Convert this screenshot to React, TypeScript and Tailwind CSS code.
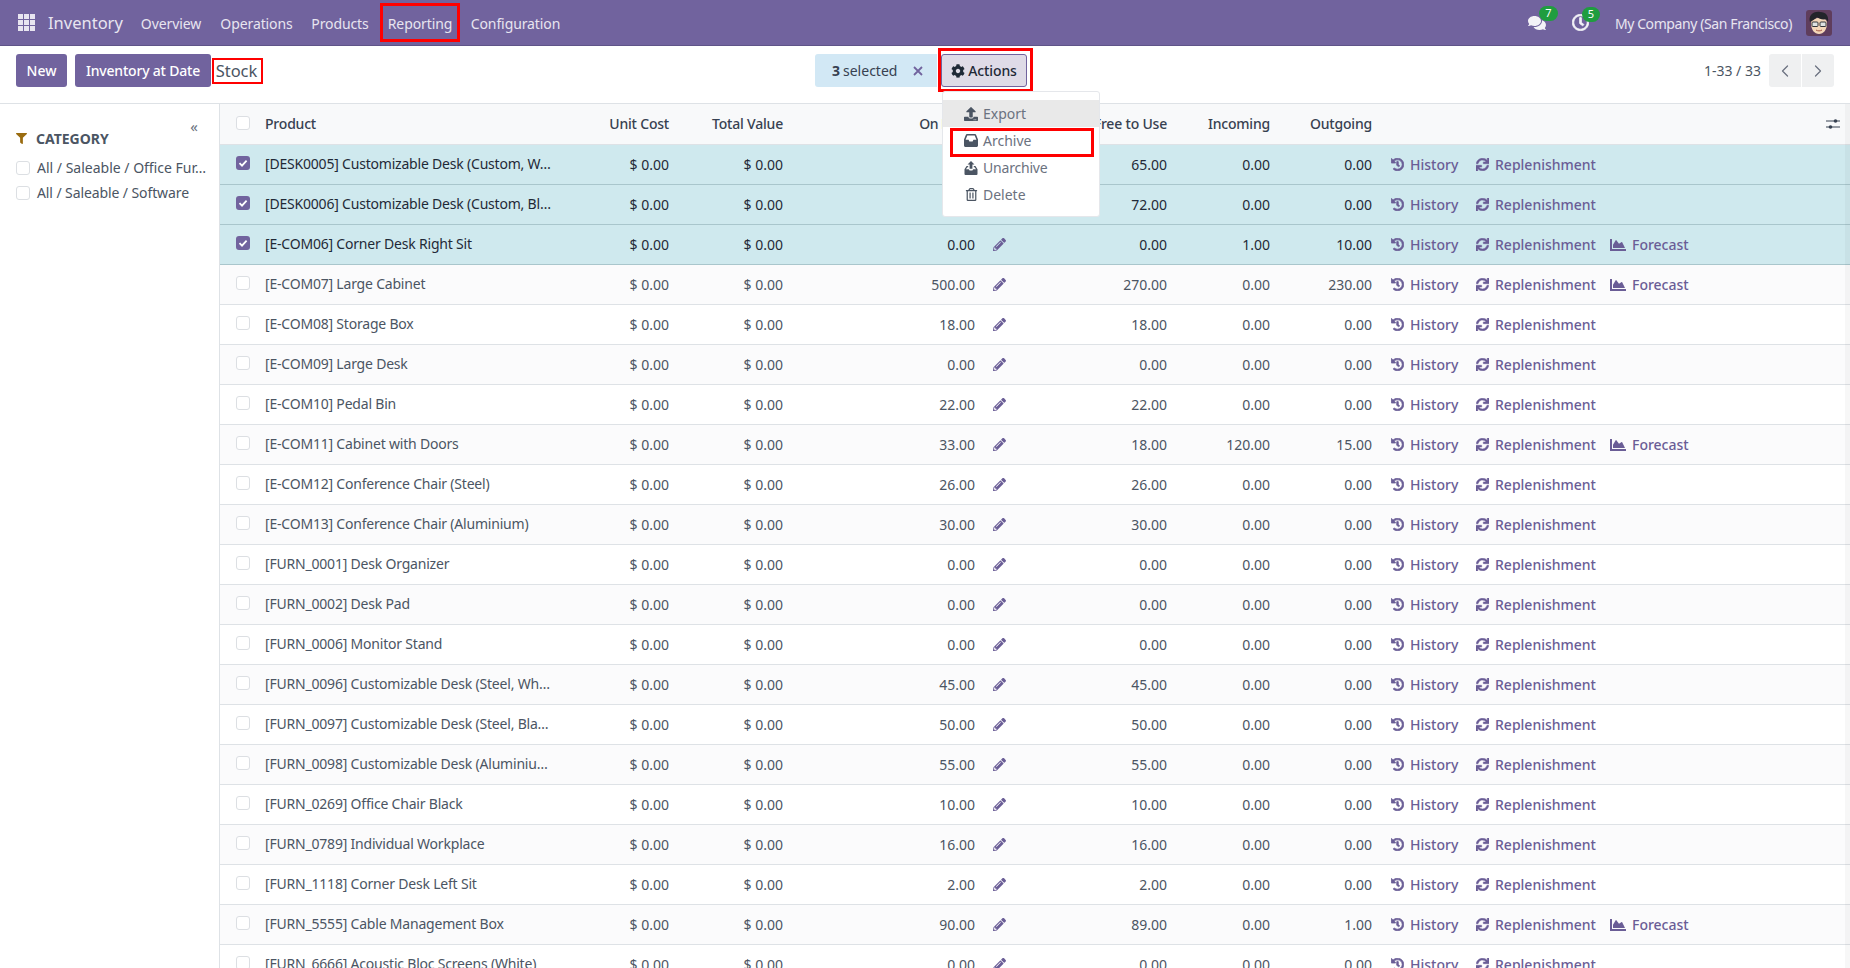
import { FaChartArea, FaCog, FaComments, FaFilter, FaHistory, FaPencilAlt, FaRegClock, FaRegTrashAlt, FaSync, FaUpload } from "react-icons/fa";
import { ChevronLeft, ChevronRight } from "lucide-react";

interface ProductRow {
  name: string;
  onHand: string;
  free: string;
  incoming: string;
  outgoing: string;
  forecast?: boolean;
  selected?: boolean;
}

const rows: ProductRow[] = [
  { name: "[DESK0005] Customizable Desk (Custom, W…", onHand: "65.00", free: "65.00", incoming: "0.00", outgoing: "0.00", selected: true },
  { name: "[DESK0006] Customizable Desk (Custom, Bl…", onHand: "72.00", free: "72.00", incoming: "0.00", outgoing: "0.00", selected: true },
  { name: "[E-COM06] Corner Desk Right Sit", onHand: "0.00", free: "0.00", incoming: "1.00", outgoing: "10.00", forecast: true, selected: true },
  { name: "[E-COM07] Large Cabinet", onHand: "500.00", free: "270.00", incoming: "0.00", outgoing: "230.00", forecast: true },
  { name: "[E-COM08] Storage Box", onHand: "18.00", free: "18.00", incoming: "0.00", outgoing: "0.00" },
  { name: "[E-COM09] Large Desk", onHand: "0.00", free: "0.00", incoming: "0.00", outgoing: "0.00" },
  { name: "[E-COM10] Pedal Bin", onHand: "22.00", free: "22.00", incoming: "0.00", outgoing: "0.00" },
  { name: "[E-COM11] Cabinet with Doors", onHand: "33.00", free: "18.00", incoming: "120.00", outgoing: "15.00", forecast: true },
  { name: "[E-COM12] Conference Chair (Steel)", onHand: "26.00", free: "26.00", incoming: "0.00", outgoing: "0.00" },
  { name: "[E-COM13] Conference Chair (Aluminium)", onHand: "30.00", free: "30.00", incoming: "0.00", outgoing: "0.00" },
  { name: "[FURN_0001] Desk Organizer", onHand: "0.00", free: "0.00", incoming: "0.00", outgoing: "0.00" },
  { name: "[FURN_0002] Desk Pad", onHand: "0.00", free: "0.00", incoming: "0.00", outgoing: "0.00" },
  { name: "[FURN_0006] Monitor Stand", onHand: "0.00", free: "0.00", incoming: "0.00", outgoing: "0.00" },
  { name: "[FURN_0096] Customizable Desk (Steel, Wh…", onHand: "45.00", free: "45.00", incoming: "0.00", outgoing: "0.00" },
  { name: "[FURN_0097] Customizable Desk (Steel, Bla…", onHand: "50.00", free: "50.00", incoming: "0.00", outgoing: "0.00" },
  { name: "[FURN_0098] Customizable Desk (Aluminiu…", onHand: "55.00", free: "55.00", incoming: "0.00", outgoing: "0.00" },
  { name: "[FURN_0269] Office Chair Black", onHand: "10.00", free: "10.00", incoming: "0.00", outgoing: "0.00" },
  { name: "[FURN_0789] Individual Workplace", onHand: "16.00", free: "16.00", incoming: "0.00", outgoing: "0.00" },
  { name: "[FURN_1118] Corner Desk Left Sit", onHand: "2.00", free: "2.00", incoming: "0.00", outgoing: "0.00" },
  { name: "[FURN_5555] Cable Management Box", onHand: "90.00", free: "89.00", incoming: "0.00", outgoing: "1.00", forecast: true },
  { name: "[FURN_6666] Acoustic Bloc Screens (White)", onHand: "0.00", free: "0.00", incoming: "0.00", outgoing: "0.00" },
];

function Check({ checked }: { checked?: boolean }) {
  if (checked) {
    return (
      <span className="flex h-[14px] w-[14px] items-center justify-center rounded-[3px] bg-[#71639e]">
        <svg viewBox="0 0 14 14" className="h-[14px] w-[14px]">
          <path d="M3.5 7.2 6 9.6l4.6-5" fill="none" stroke="#fff" strokeWidth="1.8" />
        </svg>
      </span>
    );
  }
  return <span className="block h-[14px] w-[14px] rounded-[3px] border border-[#dcdfe3] bg-white" />;
}

function AppsIcon() {
  return (
    <span className="grid h-[17px] w-[17px] grid-cols-3 gap-px">
      {Array.from({ length: 9 }).map((_, i) => (
        <span key={i} className="bg-[#e8e5f0]" />
      ))}
    </span>
  );
}

function Avatar() {
  return (
    <svg viewBox="0 0 26 26" className="h-[26px] w-[26px] rounded-[3px]">
      <rect width="26" height="26" fill="#5f3d5c" />
      <path d="M5 13c0 7 3.500 11 8 11s8-4 8-11-16-6-16 0Z" fill="#f4d6b8" />
      <path d="M4 12C2 6 7 1 14 2c6 0 9 4 8 10l-2-3c-3 1-7 0-9-2-1 2-4 3-7 5Z" fill="#23242a" />
      <rect x="6" y="12" width="6" height="4.500" rx="1" fill="#dfe3e3" stroke="#33363a" />
      <rect x="14" y="12" width="6" height="4.500" rx="1" fill="#dfe3e3" stroke="#33363a" />
      <path d="M10 20c2 1.200 4 1.200 6 0" fill="none" stroke="#a5553f" />
    </svg>
  );
}

function Sliders() {
  return (
    <svg viewBox="0 0 14 12" className="h-[12px] w-[14px] text-[#374151]" fill="none" stroke="currentColor">
      <path d="M0 3h14M0 9h14" />
      <circle cx="9.5" cy="3" r="1.8" fill="currentColor" stroke="none" />
      <circle cx="4.5" cy="9" r="1.8" fill="currentColor" stroke="none" />
    </svg>
  );
}

function ArchiveIcon() {
  return (
    <svg viewBox="0 0 14 13" className="h-[13px] w-[14px]" fill="currentColor">
      <path d="M3 0h8c.5 0 .9.3 1.1.7L14 5.6V11.5c0 .8-.7 1.500-1.500 1.500h-11C.7 13 0 12.300 0 11.500V5.600L1.900.7C2.100.3 2.500 0 3 0Zm.3 1.400L1.600 5.800h3l.8 1.600h3.200l.8-1.600h3l-1.700-4.400H3.300Z" />
    </svg>
  );
}

function UnarchiveIcon() {
  return (
    <svg viewBox="0 0 14 14" className="h-[14px] w-[14px]" fill="currentColor">
      <path d="M7 0 10.500 3.600H8.400v4.200H5.600V3.600H3.500L7 0Z" />
      <path d="M0.500 8.200 2.600 5h1.600v1.200H3.300L2 8.200h2.800l.8 1.400h2.800l.8-1.400H12l-1.300-2h-.9V5h1.600l2.100 3.200V13a1 1 0 0 1-1 1h-11a1 1 0 0 1-1-1Z" />
    </svg>
  );
}

function RowActions({ forecast }: { forecast?: boolean }) {
  return (
    <div className="flex items-center pl-[12px] font-medium text-[#6a5d96]">
      <span className="flex w-[85px] items-center gap-[6px]">
        <FaHistory className="mt-px h-[13px] w-[13px]" strokeWidth={28} />
        History
      </span>
      <span className="flex w-[134px] items-center gap-[6px]">
        <FaSync className="mt-px h-[13px] w-[13px]" strokeWidth={20} />
        Replenishment
      </span>
      {forecast && (
        <span className="flex items-center gap-[6px]">
          <FaChartArea className="mt-px h-[16px] w-[16px]" />
          Forecast
        </span>
      )}
    </div>
  );
}

function Row({ row, index }: { row: ProductRow; index: number }) {
  const rowClass = row.selected
    ? "h-10 border-b border-[#a9c6cc] bg-[#cfe9ee] text-[#1f2937]"
    : index % 2 === 1
      ? "h-10 border-b border-[#dee2e6] bg-[#fbfbfc] text-[#4b5563]"
      : "h-10 border-b border-[#dee2e6] bg-white text-[#4b5563]";
  // the two top rows sit right at the dropdown's edge, keep their figure behind it
  const onHandClass = row.selected && !row.forecast
    ? "px-[7px] text-right tracking-[-0.7px]"
    : "px-[7px] text-right";
  return (
    <tr className={rowClass}>
      <td className="pb-[2px] pl-[16px]">
        <Check checked={row.selected} />
      </td>
      <td className="px-[7px] pb-px tracking-[-0.2px] whitespace-nowrap">{row.name}</td>
      <td className="px-[7px] text-right">$ 0.00</td>
      <td className="px-[7px] text-right">$ 0.00</td>
      <td className={onHandClass}>{row.onHand}</td>
      <td className="pl-[11px]">
        <FaPencilAlt className="mt-px h-[13px] w-[13px] text-[#6a5d96]" />
      </td>
      <td className="px-[7px] text-right">{row.free}</td>
      <td className="px-[7px] text-right">{row.incoming}</td>
      <td className="px-[7px] text-right">{row.outgoing}</td>
      <td>
        <RowActions forecast={row.forecast} />
      </td>
    </tr>
  );
}

export default function App() {
  return (
    <div className="flex h-screen flex-col overflow-hidden bg-white font-['Noto_Sans',sans-serif] text-[14px] text-[#4b5563]">
      {/* top bar */}
      <header className="flex h-[46px] flex-none items-center border-b border-[#5f5488] bg-[#71639e] pl-[18px] pr-[18px] text-[#e8e5f0]">
        <AppsIcon />
        <span className="ml-[13px] w-[72px] pt-px text-[16.5px]">Inventory</span>
        <nav className="ml-[13px] flex h-[39px] items-center gap-[4px] text-center tracking-[-0.1px]">
          <span className="w-[76px] pt-[2px]">Overview</span>
          <span className="w-[87px] pt-[2px]">Operations</span>
          <span className="w-[72px] pt-[2px]">Products</span>
          <span className="flex h-[39px] w-[80px] items-center justify-center border-[3px] border-[#ff0000] pt-[2px]">Reporting</span>
          <span className="w-[103px] pt-[2px]">Configuration</span>
        </nav>
        <div className="ml-auto flex items-center">
          <span className="relative mr-[26px] flex h-[18px] w-[18px] items-center">
            <FaComments className="h-[18px] w-[18px] text-[#f3f2f7]" />
            <span className="absolute left-[11px] top-[-8px] flex h-[15px] w-[19px] items-center justify-center rounded-full bg-[#1f9d3f] text-[11px] text-white">7</span>
          </span>
          <span className="relative mr-[26px] flex h-[17px] w-[17px] items-center">
            <FaRegClock className="h-[17px] w-[17px] text-[#f3f2f7]" strokeWidth={24} />
            <span className="absolute left-[10px] top-[-7px] flex h-[15px] w-[18px] items-center justify-center rounded-full bg-[#1f9d3f] text-[11px] text-white">5</span>
          </span>
          <span className="mr-[14px] pt-[2px] tracking-[-0.4px]">My Company (San Francisco)</span>
          <Avatar />
        </div>
      </header>

      {/* control panel */}
      <div className="flex h-[58px] flex-none items-start border-b border-[#dee2e6] pt-[2px]">
        <div className="mt-[6px] flex w-[815px] flex-none items-center pl-[16px]">
          <button className="h-[33px] w-[51px] rounded-[3px] bg-[#71639e] font-medium text-white">New</button>
          <button className="ml-[8px] h-[33px] w-[136px] rounded-[3px] bg-[#71639e] font-medium tracking-[-0.2px] text-white">Inventory at Date</button>
          <span className="ml-[1px] flex h-[26px] w-[51px] items-center justify-center border-2 border-[#ff0000] pr-[2px] pt-px text-[16.5px]">Stock</span>
        </div>
        <div className="mt-[6px] flex h-[33px] w-[122px] flex-none items-center rounded-l-[3px] bg-[#d2e8f5] pl-[17px] text-[#374151]">
          <b className="font-bold">3</b>
          <span className="ml-[3px]">selected</span>
          <svg viewBox="0 0 10 10" className="ml-[16px] h-[10px] w-[10px] text-[#71639e]" fill="none" stroke="currentColor" strokeWidth="1.8">
            <path d="M1 1l8 8M9 1l-8 8" />
          </svg>
        </div>
        <div className="relative ml-[1px] flex-none border-[3px] border-[#ff0000] pb-[2px] pr-[3px] pt-[3px]">
          <button className="flex h-[33px] w-[86px] items-center justify-center gap-[3px] rounded-[3px] border border-[#71639e] bg-[#dfdbe7] font-medium tracking-[-0.1px] text-[#1f2937]">
            <FaCog className="h-[14px] w-[14px]" />
            Actions
          </button>
          {/* dropdown */}
          <div className="absolute left-[1px] top-[40px] z-10 w-[158px] rounded-[3px] border border-[#e5e7eb] bg-white pb-[8px] pt-[8px] text-[#6b7280]">
            <div className="flex h-[27px] items-center gap-[5px] bg-[#e9e9e9] pl-[21px]">
              <span className="flex w-[14px] justify-center text-[#4b5563]"><FaUpload className="h-[14px] w-[14px]" /></span>
              Export
            </div>
            <div className="relative flex h-[27px] items-center gap-[5px] pl-[21px]">
              <span className="flex w-[14px] justify-center text-[#4b5563]"><ArchiveIcon /></span>
              Archive
              <span className="absolute left-[7px] top-[1px] h-[29px] w-[144px] border-[3px] border-[#ff0000]" />
            </div>
            <div className="flex h-[27px] items-center gap-[5px] pl-[21px] tracking-[-0.2px]">
              <span className="flex w-[14px] justify-center text-[#4b5563]"><UnarchiveIcon /></span>
              Unarchive
            </div>
            <div className="flex h-[27px] items-center gap-[5px] pl-[21px]">
              <span className="flex w-[14px] justify-center text-[#4b5563]"><FaRegTrashAlt className="h-[13px] w-[13px]" /></span>
              Delete
            </div>
          </div>
        </div>
        <div className="ml-auto mt-[6px] flex items-center pr-[16px]">
          <span className="mr-[8px]">1-33 / 33</span>
          <button className="flex h-[33px] w-[32px] items-center justify-center rounded-l-[3px] bg-[#eff0f1] text-[#6b7280]">
            <ChevronLeft className="h-[20px] w-[20px]" strokeWidth={1.5} />
          </button>
          <button className="ml-[1px] flex h-[33px] w-[32px] items-center justify-center rounded-r-[3px] bg-[#eff0f1] text-[#6b7280]">
            <ChevronRight className="h-[20px] w-[20px]" strokeWidth={1.5} />
          </button>
        </div>
      </div>

      <div className="flex min-h-0 flex-1">
        {/* search panel */}
        <aside className="w-[220px] flex-none border-r border-[#dee2e6] pl-[16px] pt-[14px]">
          <div className="flex h-[16px] justify-end pr-[21px] text-[15px] leading-[16px] text-[#6b7280]">«</div>
          <div className="mt-[-6px] flex items-center gap-[9px] font-bold text-[#4b5563]">
            <FaFilter className="h-[11px] w-[11px] text-[#9a6c10]" />
            CATEGORY
          </div>
          <div className="mt-[6px] flex h-[25px] items-center gap-[7px]">
            <Check />
            <span className="whitespace-nowrap">All / Saleable / Office Fur…</span>
          </div>
          <div className="flex h-[25px] items-center gap-[7px]">
            <Check />
            <span className="whitespace-nowrap tracking-[-0.1px]">All / Saleable / Software</span>
          </div>
        </aside>

        {/* list */}
        <div className="relative min-w-0 flex-1 overflow-hidden">
          <table className="w-[1630px] table-fixed border-collapse">
            <colgroup>
              <col className="w-[38px]" />
              <col className="w-[308px]" />
              <col className="w-[110px]" />
              <col className="w-[114px]" />
              <col className="w-[192px]" />
              <col className="w-[58px]" />
              <col className="w-[134px]" />
              <col className="w-[103px]" />
              <col className="w-[102px]" />
              <col />
            </colgroup>
            <thead>
              <tr className="h-10 border-b border-[#dee2e6] bg-[#f8f9fa] font-medium tracking-[-0.2px] text-[#374151]">
                <th className="pb-[2px] pl-[16px] font-medium"><Check /></th>
                <th className="px-[7px] text-left font-medium">Product</th>
                <th className="px-[7px] text-right font-medium">Unit Cost</th>
                <th className="px-[7px] text-right font-medium">Total Value</th>
                <th className="px-[7px] text-right font-medium tracking-[-0.5px]">On Hand</th>
                <th />
                <th className="px-[7px] text-right font-medium">Free to Use</th>
                <th className="px-[7px] text-right font-medium">Incoming</th>
                <th className="px-[7px] text-right font-medium">Outgoing</th>
                <th className="pr-[10px]">
                  <div className="flex justify-end"><Sliders /></div>
                </th>
              </tr>
            </thead>
            <tbody>
              {rows.map((row, i) => (
                <Row key={row.name} row={row} index={i} />
              ))}
            </tbody>
          </table>
          {/* overlay scrollbar track */}
          <div className="absolute bottom-0 right-0 top-0 w-[5px] bg-black/[0.03]" />
        </div>
      </div>
    </div>
  );
}
